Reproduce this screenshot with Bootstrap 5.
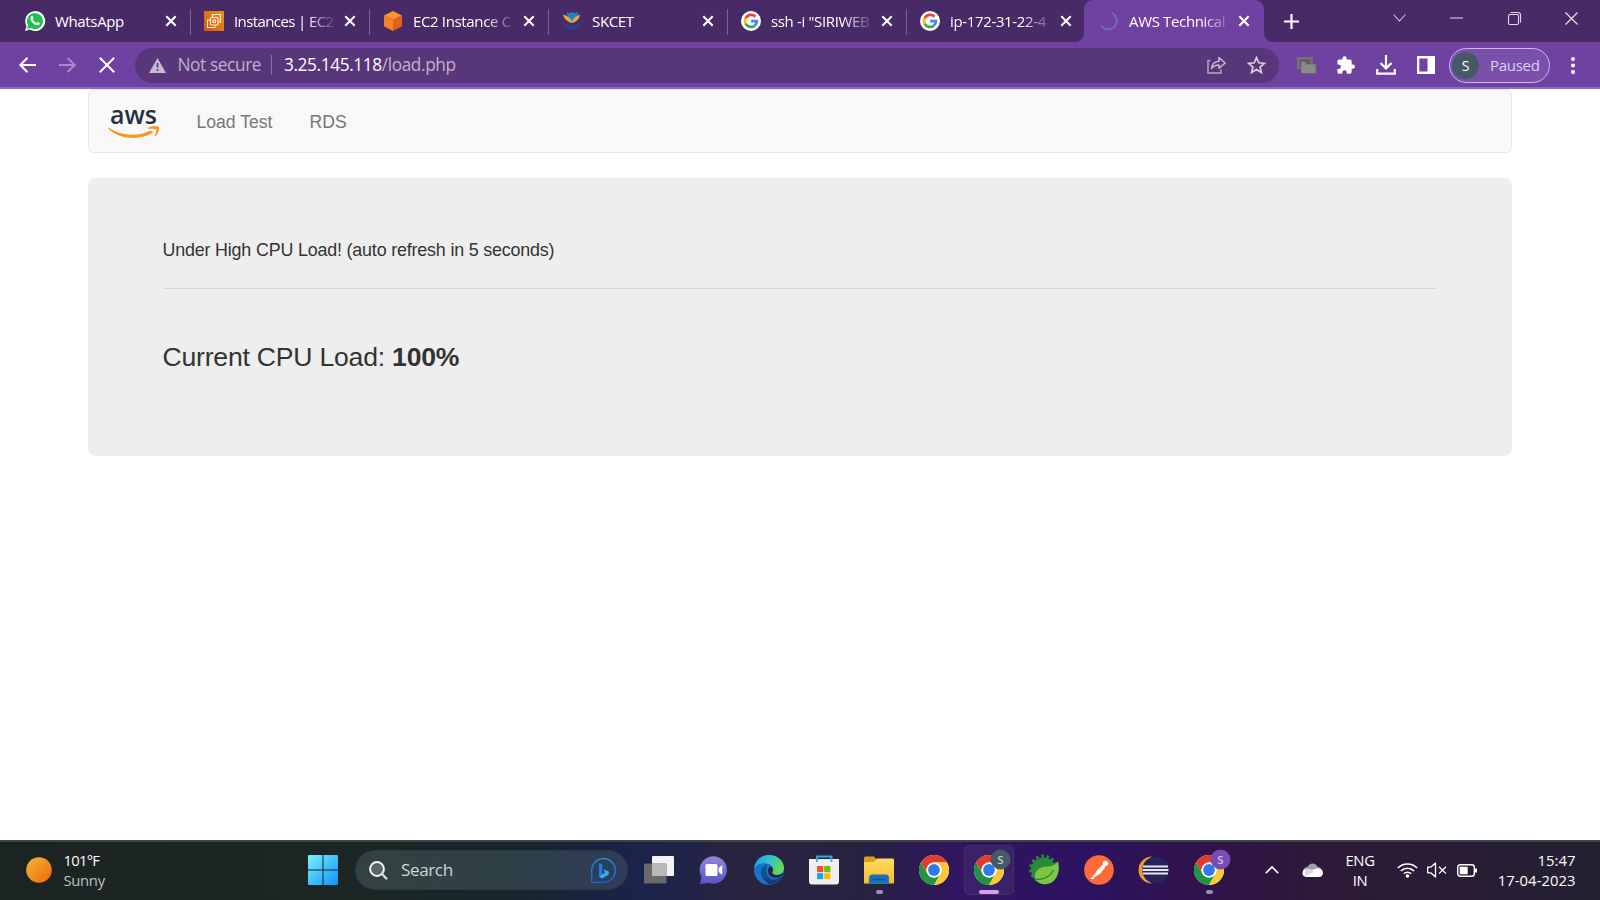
<!DOCTYPE html>
<html lang="en">
<head>
<meta charset="utf-8">
<meta name="viewport" content="width=device-width, initial-scale=1">
<title>AWS Technical Essentials</title>
<link href="https://cdn.jsdelivr.net/npm/bootstrap@5.3.0/dist/css/bootstrap.min.css" rel="stylesheet">
<style>
  body { font-family: "Open Sans", sans-serif; background: #fff; height: 900px; overflow: hidden; }
  svg { display: block; flex: none; overflow: visible; }

  /* tab strip */
  .tab-strip { height: 42px; background: #472a66; padding-left: 11.5px; color: #fff; }
  .tab-item { width: 179px; flex: none; position: relative; padding: 0 14px 0 13.5px; font-size: 15px; letter-spacing: -.35px; }
  .tab-item.ruled::after { content: ""; position: absolute; right: 0; top: 9px; width: 1px; height: 26px; background: #7b6294; }
  .tab-label { width: 100px; margin-left: 10px; white-space: nowrap; line-height: 22px; }
  .tab-label.tight { letter-spacing: -.6px; }
  .tab-label.faded { -webkit-mask-image: linear-gradient(90deg,#000 72%,transparent 104%); mask-image: linear-gradient(90deg,#000 72%,transparent 104%); }
  .tab-item.current { background: #6f41a1; border-radius: 9px 9px 0 0; margin-left: -1.5px; width: 180px; padding-left: 15px; }
  .tab-item.current::before, .tab-item.current::after { content: ""; position: absolute; bottom: 0; width: 8px; height: 8px; }
  .tab-item.current::before { left: -8px; background: radial-gradient(circle at 0 0, transparent 7.5px, #6f41a1 8px); }
  .tab-item.current::after { right: -8px; background: radial-gradient(circle at 100% 0, transparent 7.5px, #6f41a1 8px); }
  .new-tab { padding-left: 19.5px; }
  .win-btn { width: 57.3px; height: 36px; }

  /* toolbar */
  .tool-bar { height: 47px; background: #6f41a1; border-bottom: 2px solid #9069b8; padding: 1px 0 0 7px; }
  .nav-btn { width: 40px; }
  .omnibox { width: 1144px; height: 35px; margin-left: 8px; border-radius: 18px; background: #573679; font-size: 17.3px; letter-spacing: -.4px; color: #c0b2cf; padding: 0 13px 0 14px; }
  .url-rule { width: 1px; height: 20px; background: #8b74a3; }
  .profile-pill { width: 101px; height: 35px; border: 1.5px solid #cbb8f5; border-radius: 18px; background: #7a50ab; color: #dcd0f7; font-size: 15px; letter-spacing: -.3px; margin-left: 14px; padding-left: 2px; }
  .avatar { width: 27px; height: 27px; background: #455a64; color: #fff; font-size: 14px; }

  /* page */
  .page { font-family: "Liberation Sans", Arial, sans-serif; color: #333; width: 1424.5px; margin-left: 87.5px; height: 751px; }
  .site-nav { height: 64px; background: #f8f8f8; border: 1px solid #e7e7e7; border-radius: 5px; font-size: 17.6px; color: #777; padding: 2px 0 0 19px; }
  .hero { margin-top: 25px; height: 278px; background: #eee; border-radius: 7.5px; padding: 60px 75px 0; }
  .hero p { font-size: 17.86px; letter-spacing: -.17px; line-height: 25px; margin: 0; }
  .hero hr { margin: 24.5px 0 0; border: 0; height: 1px; background: #d7d7d7; opacity: 1; }
  .hero .load-line { font-size: 26.6px; letter-spacing: -.22px; line-height: 36px; margin-top: 50.5px; }

  /* taskbar */
  .task-bar { height: 60px; border-top: 2px solid #3d4347; color: #fff; padding-bottom: 2px;
    background: linear-gradient(90deg,#1c2423 0,#1b2625 24%,#16262b 32%,#1a234b 40%,#282440 46%,#282241 54%,#311561 60%,#2c1260 68%,#301348 76%,#2d1938 82%,#291c35 90%,#242131 100%); }
  .search-box { width: 273px; height: 40px; border-radius: 20px; background: linear-gradient(90deg,#334140,#2f4047 55%,#303c5a); border: 1px solid #2d3a3c; font-size: 17.2px; letter-spacing: -.45px; color: #cfd5d5; padding: 0 11px 0 13px; margin-left: 17.5px; }
  .slot { width: 55px; height: 50px; flex: none; position: relative; }
  .slot.on::before { content: ""; position: absolute; left: 2px; width: 50px; top: 0; bottom: 0; border-radius: 5px; background: #3a2268; border: 1px solid #44306f; }
  .slot.on svg { position: relative; }
  .slot .run { position: absolute; left: 24px; bottom: 1px; width: 7px; height: 4px; border-radius: 2px; background: #9d8fb0; }
  .slot .run.wide { left: 17px; width: 20px; background: #dc9de8; }
  .tray-text { font-size: 14.8px; line-height: 20px; letter-spacing: -.3px; padding-bottom: 1px; }
  .clock { width: 80px; margin-left: 18.5px; letter-spacing: .05px; white-space: nowrap; }
</style>
</head>
<body class="d-flex flex-column">

<!-- shared glyphs -->
<svg width="0" height="0" class="position-absolute">
  <defs>
    <symbol id="x" viewBox="0 0 12 12"><path d="M1.3 1.3l9.4 9.4M10.7 1.3l-9.4 9.4" stroke="#fff" stroke-width="2.1" fill="none"/></symbol>
    <symbol id="goog" viewBox="0 0 20 20">
      <circle cx="10" cy="10" r="10" fill="#fff"/>
      <g fill="none" stroke-width="2.7">
        <path d="M14.5 5.7A6 6 0 0 0 4.8 7.2" stroke="#ea4335"/>
        <path d="M4.8 7.1a6 6 0 0 0 0 5.9" stroke="#fbbc05"/>
        <path d="M4.8 12.9a6 6 0 0 0 8.9 1.8" stroke="#34a853"/>
        <path d="M10.1 10.1h5.8a6 6 0 0 1-2.2 4.6" stroke="#4285f4"/>
      </g>
    </symbol>
    <symbol id="chrome" viewBox="0 0 30 30">
      <circle cx="15" cy="15" r="15" fill="#fff"/>
      <path d="M2 7.5a15 15 0 0 1 26 0H15a7.5 7.5 0 0 0-6.5 11.2z" fill="#e33b2e"/>
      <path d="M2 7.5a15 15 0 0 0 13 22.5l6.5-11.3a7.5 7.5 0 0 1-13 0z" fill="#229342"/>
      <path d="M28 7.5A15 15 0 0 1 15 30l6.5-11.3A7.5 7.5 0 0 0 15 7.5z" fill="#fcc934"/>
      <circle cx="15" cy="15" r="7.5" fill="#fff"/><circle cx="15" cy="15" r="5.9" fill="#2f7bea"/>
    </symbol>
    <linearGradient id="win" gradientUnits="userSpaceOnUse" x2="30" y2="30"><stop stop-color="#7bf0ff"/><stop offset="1" stop-color="#0a93fb"/></linearGradient>
    <linearGradient id="sun" x2="1" y2="1"><stop stop-color="#f2ba35"/><stop offset="1" stop-color="#ee6408"/></linearGradient>
    <linearGradient id="bing" x2="0" y2="1"><stop stop-color="#2e9fd0"/><stop offset="1" stop-color="#2a5ee0"/></linearGradient>
    <linearGradient id="chat" x2="0" y2="1"><stop stop-color="#9187d8"/><stop offset="1" stop-color="#5855c8"/></linearGradient>
    <linearGradient id="edgeTop" x2="1" y2=".4"><stop stop-color="#2093df"/><stop offset=".5" stop-color="#31bfd7"/><stop offset="1" stop-color="#62d957"/></linearGradient>
    <linearGradient id="fold" x2="0" y2="1"><stop stop-color="#ffdb62"/><stop offset="1" stop-color="#f5bb2e"/></linearGradient>
    <linearGradient id="orange" x1="0" y1="1" x2="1" y2="0"><stop stop-color="#c95c11"/><stop offset="1" stop-color="#f59018"/></linearGradient>
  </defs>
</svg>

<header>
  <div class="tab-strip d-flex">
    <div class="tab-item ruled d-flex align-items-center">
      <svg width="20" height="20" viewBox="0 0 20 20"><path d="M0 20l1.5-5A10 10 0 1 1 5 18.6z" fill="#f4fff6"/><path d="M2.1 17.9l1-3.6A8 8 0 1 1 5.8 17z" fill="#20c050"/><path d="M6.4 5.2c.6-.6 1.2-.4 1.5.4l.6 1.5c0 .6-.8 1-.8 1.4.7 1.6 2 2.7 3.6 3.4.6 0 1-.9 1.4-1l2 1c.3.3 0 1.4-.5 1.9-2.3 1.8-8.6-2-8.8-6.4 0-.8.4-1.6 1-2.2z" fill="#fff"/></svg>
      <span class="tab-label">WhatsApp</span><svg class="ms-auto" width="12" height="12"><use href="#x"/></svg>
    </div>
    <div class="tab-item ruled d-flex align-items-center">
      <svg width="20" height="20" viewBox="0 0 20 20"><rect width="20" height="20" fill="url(#orange)"/><g fill="none" stroke="#fff1df" stroke-width="1.1"><path d="M8.5 6V3.5h8V11h-2.300M6 9H3.500v7.500H11V14.500"/><rect x="6.500" y="6.500" width="7.500" height="7.500" rx="1"/><path d="M9 9h2.500v2.500H9z"/></g></svg>
      <span class="tab-label faded tight">Instances | EC2</span><svg class="ms-auto" width="12" height="12"><use href="#x"/></svg>
    </div>
    <div class="tab-item ruled d-flex align-items-center">
      <svg width="20" height="20" viewBox="0 0 20 20"><path d="M10 0l9 4.5-9 4.500-9-4.500z" fill="#f9952b"/><path d="M1 4.500l9 4.500v11l-9-4.800z" fill="#f58426"/><path d="M19 4.500L10 9v11l9-4.800z" fill="#e2621d"/></svg>
      <span class="tab-label faded">EC2 Instance C</span><svg class="ms-auto" width="12" height="12"><use href="#x"/></svg>
    </div>
    <div class="tab-item ruled d-flex align-items-center">
      <svg width="20" height="20" viewBox="0 0 20 20"><path d="M5 1l2.500 1.500L10 1l2.500 1.500L16 1l-1 5.500L10 10 5.500 6.500z" fill="#1b86cb"/><path d="M1 3.500C5.500 5 9 7.500 10 10.500c1-3 4-5.500 8-7-.5 4.500-3 7-8 8.500C5 10.500 2 8 1 3.500z" fill="#eaa543"/><path d="M6.500 4.500L10 8.500l4-4L10 3z" fill="#2a80b8"/><path d="M2 13q8 3 16 0-1 6-8 6t-8-6z" fill="#2c3e8c"/></svg>
      <span class="tab-label">SKCET</span><svg class="ms-auto" width="12" height="12"><use href="#x"/></svg>
    </div>
    <div class="tab-item ruled d-flex align-items-center">
      <svg width="20" height="20"><use href="#goog"/></svg>
      <span class="tab-label faded">ssh -i "SIRIWEB</span><svg class="ms-auto" width="12" height="12"><use href="#x"/></svg>
    </div>
    <div class="tab-item d-flex align-items-center">
      <svg width="20" height="20"><use href="#goog"/></svg>
      <span class="tab-label faded">ip-172-31-22-4</span><svg class="ms-auto" width="12" height="12"><use href="#x"/></svg>
    </div>
    <div class="tab-item current d-flex align-items-center">
      <svg width="20" height="20" viewBox="0 0 20 20"><path d="M13 2.200a8.500 8.500 0 1 1-11 12" fill="none" stroke="#7565c4" stroke-width="2"/></svg>
      <span class="tab-label faded">AWS Technical</span><svg class="ms-auto" width="12" height="12"><use href="#x"/></svg>
    </div>
    <div class="new-tab d-flex align-items-center"><svg width="15" height="15" viewBox="0 0 15 15"><path d="M7.500 0v15M0 7.500h15" stroke="#fff" stroke-width="2.200"/></svg></div>
    <div class="d-flex ms-auto">
      <div class="win-btn d-flex align-items-center justify-content-center"><svg width="13" height="8" viewBox="0 0 13 8"><path d="M.5.5l6 6.500 6-6.500" fill="none" stroke="#d7cfe0" stroke-width="1.100"/></svg></div>
      <div class="win-btn d-flex align-items-center justify-content-center"><svg width="13" height="2"><path d="M0 1h13" stroke="#d7cfe0" stroke-width="1.100"/></svg></div>
      <div class="win-btn d-flex align-items-center justify-content-center"><svg width="13" height="13" viewBox="0 0 13 13"><g fill="none" stroke="#e2dbe9" stroke-width="1.100"><rect x=".5" y="2.500" width="10" height="10" rx="1.500"/><path d="M2.500.500H10a2.500 2.500 0 0 1 2.500 2.500v7.500"/></g></svg></div>
      <div class="win-btn d-flex align-items-center justify-content-center"><svg width="13" height="13" viewBox="0 0 13 13"><path d="M.5.500l12 12M12.500.500l-12 12" stroke="#e8e2ee" stroke-width="1.200"/></svg></div>
    </div>
  </div>

  <div class="tool-bar d-flex align-items-center">
    <div class="nav-btn d-flex justify-content-center"><svg width="17" height="16" viewBox="0 0 17 16"><path d="M8.500.8L1.300 8l7.200 7.200M1.500 8H17" fill="none" stroke="#fff" stroke-width="2"/></svg></div>
    <div class="nav-btn d-flex justify-content-center"><svg width="17" height="16" viewBox="0 0 17 16"><path d="M8.500.8L15.700 8l-7.200 7.200M15.500 8H0" fill="none" stroke="#a98bca" stroke-width="1.900"/></svg></div>
    <div class="nav-btn d-flex justify-content-center"><svg width="16" height="16" viewBox="0 0 16 16"><path d="M.8.8l14.400 14.400M15.200.8L.8 15.200" stroke="#fff" stroke-width="2"/></svg></div>
    <div class="omnibox d-flex align-items-center">
      <svg width="17" height="15" viewBox="0 0 17 15"><path d="M8.500 0L17 15H0z" fill="#c6bcd2"/><path d="M8.500 5v4.500M8.500 11v2" stroke="#573679" stroke-width="1.700"/></svg>
      <span style="margin-left:11.5px;width:93.5px">Not secure</span>
      <span class="url-rule"></span>
      <span style="margin-left:12px"><span class="text-white">3.25.145.118</span>/load.php</span>
      <svg class="ms-auto" width="19" height="18" viewBox="0 0 19 18"><path d="M3.500 4.500H1V17h13v-3.500" fill="none" stroke="#b7a8c6" stroke-width="1.500"/><path d="M4.500 12.500c.5-4.500 3-7 7.500-7.300V1.500L18.200 7 12 12.300V9c-3.500 0-5.500 1-7.500 3.500z" fill="none" stroke="#c6bad2" stroke-width="1.500" stroke-linejoin="round"/></svg>
      <svg style="margin-left:21px" width="19" height="18" viewBox="0 0 19 18"><path d="M9.500 1.700l2.200 5.100 5.600.5-4.200 3.700 1.200 5.400-4.800-2.900-4.800 2.900L5.900 11 1.700 7.300l5.600-.5z" fill="none" stroke="#d8cfe0" stroke-width="1.700"/></svg>
    </div>
    <svg style="margin-left:17.5px" width="20" height="17" viewBox="0 0 20 17"><rect width="16" height="12" fill="#777078"/><path d="M2.500 2.500h11v7h-11z" fill="#5f5a60"/><path d="M4 4.500h5V7h10v9.500H4z" fill="#8b8b89" stroke="#666466" stroke-width=".7"/></svg>
    <svg style="margin-left:20px" width="18" height="18" viewBox="1.500 1 21.500 21"><path d="M20.500 11H19V7a2 2 0 0 0-2-2h-4V3.500a2.500 2.500 0 0 0-5 0V5H4a2 2 0 0 0-2 2v3.800h1.500a2.700 2.700 0 0 1 0 5.400H2V20a2 2 0 0 0 2 2h3.800v-1.500a2.700 2.700 0 0 1 5.400 0V22H17a2 2 0 0 0 2-2v-4h1.500a2.500 2.500 0 0 0 0-5z" fill="#fff"/></svg>
    <svg style="margin-left:21.500px" width="20" height="20" viewBox="0 0 20 20"><path d="M10 0v13M4.500 8l5.500 5.500L15.500 8M1.200 14v4.700h17.600V14" fill="none" stroke="#fff" stroke-width="2.200"/></svg>
    <svg style="margin-left:21px" width="18" height="18" viewBox="0 0 18 18"><path d="M0 0h18v18H0zM2.300 2.500v13h8.200v-13z" fill="#fff" fill-rule="evenodd"/></svg>
    <div class="profile-pill d-flex align-items-center">
      <span class="avatar rounded-circle d-flex align-items-center justify-content-center">S</span>
      <span style="margin-left:11px">Paused</span>
    </div>
    <svg style="margin-left:20.500px" width="4" height="17" viewBox="0 0 4 17"><g fill="#fff"><circle cx="2" cy="2" r="2"/><circle cx="2" cy="8.500" r="2"/><circle cx="2" cy="15" r="2"/></g></svg>
  </div>
</header>

<main class="page">
  <nav class="site-nav d-flex align-items-center">
    <svg width="52" height="32" viewBox="0 0 52 32"><text x="2" y="18" font-family="Open Sans, sans-serif" font-size="25" font-weight="600" fill="#252f3e" textLength="47" lengthAdjust="spacingAndGlyphs">aws</text><path d="M.5 21.500c13 8.500 29 9.500 42.500 3l2.300 2C33 34.500 12 34 .3 22.700z" fill="#f79a1c"/><path d="M40 22c4-2.500 8.500-2.300 11-1 .5 3-1 6.800-3.500 9.300l-.8-.6c1-2.300 1.800-4.500 1.600-6.200-2-.9-5-.8-8.300-.4z" fill="#f79a1c"/></svg>
    <span style="margin-left:37px">Load Test</span>
    <span style="margin-left:37px">RDS</span>
  </nav>
  <section class="hero">
    <p>Under High CPU Load! (auto refresh in 5 seconds)</p>
    <hr>
    <p class="load-line">Current CPU Load: <b>100%</b></p>
  </section>
</main>

<footer class="task-bar d-flex align-items-center flex-shrink-0">
  <div class="d-flex align-items-center" style="width:307.5px;padding-left:26px">
    <svg width="26" height="26" viewBox="0 0 26 26"><circle cx="13" cy="13" r="12.800" fill="url(#sun)"/></svg>
    <div class="tray-text" style="margin-left:11.5px"><div style="letter-spacing:-.75px">101°F</div><div style="color:#bcc2c1">Sunny</div></div>
  </div>
  <svg width="30" height="30" viewBox="0 0 30 30"><path d="M1 0h13.500v14.500H0V1a1 1 0 0 1 1-1zM15.500 0H29a1 1 0 0 1 1 1v13.500H15.500zM0 15.500h14.500V30H1a1 1 0 0 1-1-1zM15.500 15.500H30V29a1 1 0 0 1-1 1H15.500z" fill="url(#win)"/></svg>
  <div class="search-box d-flex align-items-center">
    <svg width="19" height="19" viewBox="0 0 19 19"><circle cx="8" cy="8" r="6.900" fill="#5a6666" stroke="#f0f3f3" stroke-width="2"/><path d="M12.800 12.800l5.200 5.400" stroke="#dde2e2" stroke-width="2.200"/></svg>
    <span style="margin-left:13px">Search</span>
    <svg class="ms-auto" width="25" height="25" viewBox="0 0 25 25"><path d="M.7 24.300V12.500A11.800 11.800 0 1 1 12.500 24.300z" fill="#26415f" stroke="url(#bing)" stroke-width="1.200"/><path d="M8 5l3.200 1.300v10L8 18.800z" fill="#2f74ea"/><path d="M8 18.800l3.200-2.500 2.800-1.500-1.500-3.600 5.300 2.300v3L11 20.500z" fill="#42a5ee"/></svg>
  </div>
  <div class="d-flex" style="margin-left:3.500px">
    <div class="slot d-flex align-items-center justify-content-center"><svg width="30" height="28" viewBox="0 0 30 28"><rect x="8" width="22" height="20" rx="1" fill="#f3f3f3"/><rect y="7.500" width="22.500" height="20" rx="1" fill="#696969"/><path d="M8 7.500h14.500V20H8z" fill="#b9b9b9"/></svg></div>
    <div class="slot d-flex align-items-center justify-content-center"><svg width="28" height="28" viewBox="0 0 28 28"><path d="M0 28l1.500-7A13.700 13.700 0 1 1 9 27z" fill="url(#chat)"/><rect x="5.500" y="8" width="12" height="12" rx="1.500" fill="#fff"/><path d="M18.700 12l3.600-3v10l-3.600-3z" fill="#fff"/></svg></div>
    <div class="slot d-flex align-items-center justify-content-center"><svg width="30" height="30" viewBox="0 0 30 30"><circle cx="15" cy="15" r="15" fill="#1675c9"/><path d="M0 14C1 5 7 0 15 0c8.500 0 15 6 15 13 0 4-3 7-7 7-3.500 0-5.500-1.500-5-3 2-3 .5-6.500-3-8C9 7 2 9 0 14z" fill="url(#edgeTop)"/><path d="M14 9C6 11 5 20 10 25c4 4 11 4 16.500-.5-4 1-9 .5-12-3-3-4-3-9-.5-12.500z" fill="#134f93"/><path d="M29 20.500c-2 4-6 7.500-11 9.500-5-1-8-4-8.500-9 3 5 12 6 19.500-.5z" fill="#123f7c"/><path d="M16 11.500c3 .5 4.200 3.500 2.300 5.500-.5 1.500 1.500 3 4.800 3 3 0 5-1 6.500-2.500-.5 4-6 6-10 5-6-1.500-7-8-3.600-11z" fill="#282241"/></svg></div>
    <div class="slot d-flex align-items-center justify-content-center"><svg width="30" height="30" viewBox="0 0 30 30"><path d="M8 6V1.500h14.500V6" fill="none" stroke="#2caae8" stroke-width="1.800"/><path d="M0 4h30v22.500a3 3 0 0 1-3 3H3a3 3 0 0 1-3-3z" fill="#efeff1"/><path d="M8 4V2.500M22.500 4V2.500M8 3.500V7M22.500 3.500V7" stroke="#2caae8" stroke-width="1.800"/><path d="M8 11h6.200v6.200H8z" fill="#f0512b"/><path d="M15.200 11h6.200v6.200h-6.200z" fill="#7fb90a"/><path d="M8 18.200h6.200v6H8z" fill="#16a5ec"/><path d="M15.200 18.200h6.200v6h-6.200z" fill="#fdb90c"/></svg></div>
    <div class="slot d-flex align-items-center justify-content-center"><svg width="30" height="28" viewBox="0 0 30 28"><path d="M0 2a1.500 1.500 0 0 1 1.500-1.500H10L12.500 3v5H0z" fill="#dba016"/><path d="M0 6h10l3-3.500h15.500A1.500 1.500 0 0 1 30 4v23.500H0z" fill="url(#fold)"/><path d="M5 27.500V22a3.500 3.500 0 0 1 3.500-3.500h13A3.500 3.500 0 0 1 25 22v5.500z" fill="#1572bd"/><path d="M9 23.500h12" stroke="#0c4d8b" stroke-width="1.200"/></svg><i class="run"></i></div>
    <div class="slot d-flex align-items-center justify-content-center"><svg width="30" height="30"><use href="#chrome"/></svg></div>
    <div class="slot on d-flex align-items-center justify-content-center"><svg width="30" height="30" viewBox="0 0 30 30"><use href="#chrome" width="30" height="30"/><circle cx="26.500" cy="4.500" r="10" fill="#455a64"/><text x="26.500" y="8.700" text-anchor="middle" font-size="11.500" font-weight="600" fill="#c4ccd0">S</text></svg><i class="run wide"></i></div>
    <div class="slot d-flex align-items-center justify-content-center"><svg width="30" height="30" viewBox="0 0 30 30"><circle cx="14.500" cy="15" r="12.500" fill="#2b8a37"/><circle cx="14.500" cy="14" r="12.700" fill="none" stroke="#2b8a37" stroke-width="3.500" stroke-dasharray="2.700 2.500"/><path d="M6 24C5 16 10 12 18 11.500c5 0 9-2 11-5.500 2 8 .5 16-5 20.500-5.500 4.500-14 3.500-18-2.500z" fill="#7cc643"/><path d="M6 24.500c9 .5 15-3 18.500-9.500" fill="none" stroke="#2b8a37" stroke-width="1.400"/></svg></div>
    <div class="slot d-flex align-items-center justify-content-center"><svg width="30" height="30" viewBox="0 0 30 30"><circle cx="15" cy="15" r="14.800" fill="#fd6c38"/><circle cx="21.500" cy="8.500" r="2.700" fill="#fff"/><path d="M18.500 10l2.500 2-4.500 6-7.500 5 4-7z" fill="#fff" stroke="#fff" stroke-width=".6"/><path d="M11 19l-4 4.500h3" stroke="#fff" fill="none"/></svg></div>
    <div class="slot d-flex align-items-center justify-content-center"><svg width="30" height="28" viewBox="0 0 30 28"><path d="M13 .5a13.500 13.500 0 0 0 0 27C6 23 6 5 13 .5z" fill="#f49a34"/><circle cx="16.500" cy="14" r="13.300" fill="#27245a"/><path d="M4 10.500h25M3.500 14h26M4 17.500h25" stroke="#e9e8f0" stroke-width="2"/></svg></div>
    <div class="slot d-flex align-items-center justify-content-center"><svg width="30" height="30" viewBox="0 0 30 30"><use href="#chrome" width="30" height="30"/><circle cx="26.500" cy="4.500" r="10" fill="#7a4db5"/><text x="26.500" y="8.700" text-anchor="middle" font-size="11.500" font-weight="600" fill="#d3c1ec">S</text></svg><i class="run"></i></div>
  </div>
  <div class="d-flex align-items-center ms-auto" style="padding-right:24.500px">
    <svg width="14" height="8" viewBox="0 0 14 8"><path d="M.8 7.200L7 1l6.200 6.200" fill="none" stroke="#fff" stroke-width="1.700"/></svg>
    <svg style="margin-left:22.500px" width="21" height="14" viewBox="0 0 21 14"><path d="M1 9C1 5 4 4 5.500 4 7-.5 14-1 15.500 4c2.500 0 4 1.500 4.500 4z" fill="#a69cae"/><path d="M4 14a4 4 0 0 1-1-7.700L6 6l4 1 5-1.800C19 5 21 7.500 21 9.800A4 4 0 0 1 17 14z" fill="#fff"/><path d="M3 7l4-1.500 5 3.500-9 4z" fill="#dcd7e0"/></svg>
    <div class="tray-text text-center" style="margin-left:22.500px;width:30px">ENG<br>IN</div>
    <svg style="margin-left:22px" width="21" height="16" viewBox="0 0 21 16"><g fill="none" stroke="#fff" stroke-width="1.500"><path d="M.8 6a13.500 13.500 0 0 1 19.400 0M3.800 9a9.400 9.400 0 0 1 13.400 0M6.800 11.800a5.300 5.300 0 0 1 7.400 0"/></g><circle cx="10.500" cy="14" r="1.800" fill="#fff"/></svg>
    <svg style="margin-left:9px" width="20" height="16" viewBox="0 0 20 16"><path d="M.7 5.200h3L8.500 1v14L3.700 10.800h-3z" fill="none" stroke="#fff" stroke-width="1.300" stroke-linejoin="round"/><path d="M12 4.800l7 6.800M19 4.800l-7 6.800" stroke="#fff" stroke-width="1.300"/></svg>
    <svg style="margin-left:10px" width="20" height="13" viewBox="0 0 20 13"><rect x=".7" y=".7" width="16.600" height="11.600" rx="2.500" fill="none" stroke="#fff" stroke-width="1.400"/><rect x="2.700" y="2.700" width="8" height="7.600" rx=".5" fill="#fff"/><path d="M18 4.500h2v4h-2z" fill="#fff"/></svg>
    <div class="tray-text clock text-end">15:47<br>17-04-2023</div>
  </div>
</footer>
<script src="https://cdn.jsdelivr.net/npm/bootstrap@5.3.0/dist/js/bootstrap.bundle.min.js"></script>
</body>
</html>
